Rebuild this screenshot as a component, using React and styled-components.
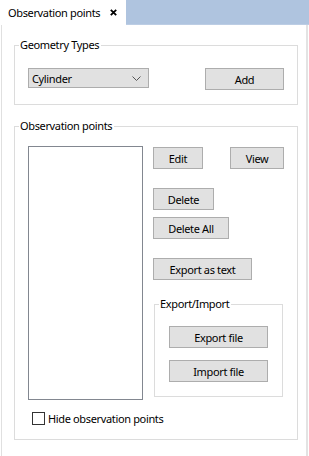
import React from "react";
import styled, { createGlobalStyle } from "styled-components";

const Global = createGlobalStyle`
  html, body { margin: 0; padding: 0; background: #ffffff; }
  body {
    width: 309px; height: 456px; overflow: hidden;
    font-family: "Noto Sans", "Open Sans", sans-serif;
    font-size: 11px; letter-spacing: -0.35px; color: #000;
  }
  * { box-sizing: border-box; }
`;

const Window = styled.div`
  width: 309px;
  height: 456px;
  display: flex;
  flex-direction: column;
  background: #fff;
`;

const TabBar = styled.div`
  height: 25px;
  display: flex;
  background: #afc4df;
  border-bottom: 1px solid #bccde4;
`;

const Tab = styled.div`
  width: 126px;
  height: 25px;
  background: #fff;
  display: flex;
  align-items: center;
  padding-left: 8px;
  gap: 10px;
  white-space: nowrap;
  svg { flex-shrink: 0; }
`;

const Panel = styled.div`
  flex: 1;
  margin: 0 1px;
  border-left: 1px solid #e0e0e0;
  border-right: 2px solid #e3e3e3;
  padding: 20px 8px 0 12px;
  display: flex;
  flex-direction: column;
`;

const Group = styled.div`
  position: relative;
  border: 1px solid #dcdcdc;
  margin-top: ${(p) => p.$mt || 0}px;
  margin-left: ${(p) => p.$ml || 0}px;
  padding: ${(p) => p.$pad};
  display: flex;
  flex-direction: column;
  ${(p) => (p.$w ? `width: ${p.$w}px;` : "")}
`;

const Legend = styled.span`
  position: absolute;
  top: -9px;
  left: 4px;
  padding: 0 2px 0 1px;
  background: #fff;
  line-height: 16px;
  white-space: nowrap;
`;

const Row = styled.div`
  display: flex;
  justify-content: ${(p) => p.$justify || "flex-start"};
  align-items: flex-start;
  gap: ${(p) => p.$gap || 0}px;
`;

const Combo = styled.div`
  width: 121px;
  height: 20px;
  background: #e1e1e1;
  border: 1px solid #adadad;
  display: flex;
  align-items: center;
  justify-content: space-between;
  padding: 0 7px 0 3px;
`;

const Button = styled.button`
  width: ${(p) => p.$w}px;
  height: 22px;
  margin-top: ${(p) => p.$mt || 0}px;
  background: #e1e1e1;
  border: 1px solid #adadad;
  border-radius: 0;
  padding: 0;
  font: inherit;
  letter-spacing: inherit;
  color: #000;
  display: flex;
  align-items: center;
  justify-content: center;
  flex-shrink: 0;
`;

const ListBox = styled.div`
  width: 115px;
  height: 254px;
  border: 1px solid #828790;
  background: #fff;
  flex-shrink: 0;
`;

const Column = styled.div`
  display: flex;
  flex-direction: column;
  align-items: flex-start;
  width: 131px;
`;

const CheckRow = styled.label`
  display: flex;
  align-items: center;
  height: 13px;
  margin: 12px 0 0 4px;
  gap: 3px;
  white-space: nowrap;
`;

const Box = styled.span`
  width: 13px;
  height: 13px;
  border: 1px solid #333;
  background: #fff;
  flex-shrink: 0;
`;

const Close = () => (
  <svg width="7" height="7" viewBox="0 0 7 7">
    <path d="M0.8 0.8 L6.2 6.2 M6.2 0.8 L0.8 6.2" stroke="#000" strokeWidth="1.8" />
  </svg>
);

const Chevron = () => (
  <svg width="9" height="5" viewBox="0 0 9 5">
    <polyline points="0.5,0.5 4.5,4.5 8.5,0.5" fill="none" stroke="#555" strokeWidth="1" />
  </svg>
);

export default function App() {
  return (
    <>
      <Global />
      <Window>
        <TabBar>
          <Tab>
            Observation points
            <Close />
          </Tab>
        </TabBar>
        <Panel>
          <Group $pad="22px 13px 14px 13px">
            <Legend>Geometry Types</Legend>
            <Row $justify="space-between">
              <Combo>
                Cylinder
                <Chevron />
              </Combo>
              <Button $w={79}>Add</Button>
            </Row>
          </Group>
          <Group $mt={21} $pad="19px 13px 14px 13px">
            <Legend>Observation points</Legend>
            <Row $gap={10}>
              <ListBox />
              <Column>
                <Row $gap={27}>
                  <Button $w={50} $mt={1}>Edit</Button>
                  <Button $w={54} $mt={1}>View</Button>
                </Row>
                <Button $w={61} $mt={19}>Delete</Button>
                <Button $w={76} $mt={7}>Delete All</Button>
                <Button $w={99} $mt={19}>Export as text</Button>
                <Group $mt={24} $ml={1} $w={129} $pad="21px 14px 14px 14px">
                  <Legend>Export/Import</Legend>
                  <Button $w={99}>Export file</Button>
                  <Button $w={99} $mt={12}>Import file</Button>
                </Group>
              </Column>
            </Row>
            <CheckRow>
              <Box />
              Hide observation points
            </CheckRow>
          </Group>
        </Panel>
      </Window>
    </>
  );
}
